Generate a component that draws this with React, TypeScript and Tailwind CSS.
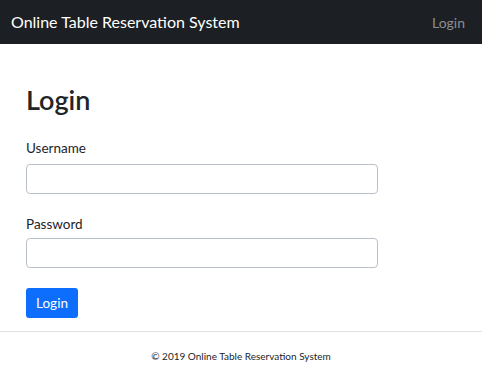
export default function App() {
  return (
    <div className="min-h-[392px] bg-white font-['Lato',sans-serif] text-[#212529]">
      <nav className="flex h-[44px] items-center justify-between bg-[#1c1f23] px-[11px]">
        <a className="text-[16px] text-white">Online Table Reservation System</a>
        <a className="pr-[6px] text-[14px] text-[#8c8e91]">Login</a>
      </nav>

      <main className="px-[26px] pt-[38px] pb-[13px]">
        <h1 className="mb-[20px] text-[27px] font-semibold leading-[35px]">Login</h1>
        <form className="w-[352px]">
          <div className="mb-[19px]">
            <label className="mb-[5px] block text-[13.5px] leading-[22px]">Username</label>
            <input
              type="text"
              className="block h-[30px] w-full rounded-[4px] border border-[#b9c0c8] px-2 text-[14px]"
            />
          </div>
          <div className="mb-[20px]">
            <label className="mb-[3px] block text-[13.5px] leading-[22px]">Password</label>
            <input
              type="password"
              className="block h-[30px] w-full rounded-[4px] border border-[#b9c0c8] px-2 text-[14px]"
            />
          </div>
          <button
            type="button"
            className="h-[30px] w-[52px] rounded-[3px] bg-[#0d6efd] text-[13.5px] text-white"
          >
            Login
          </button>
        </form>
      </main>

      <footer className="border-t border-[#dddfe1] pt-[17px] text-center text-[10px]">
        © 2019 Online Table Reservation System
      </footer>
    </div>
  );
}
